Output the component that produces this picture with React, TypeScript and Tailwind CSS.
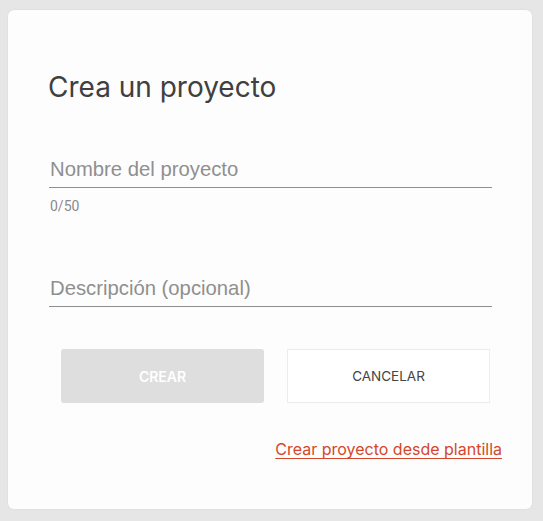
import React from "react";

export default function App() {
  return (
    <div className="w-[543px] h-[521px] bg-[#e6e6e6] pt-[10px] pl-[8px]">
      <div className="w-[524px] h-[499px] bg-[#fdfdfd] rounded-[6px] shadow-[0_0_2px_rgba(0,0,0,0.08)] flex flex-col">
        <h1 className="ml-[40px] mt-[60px] text-[28px] leading-[34px] text-[#404040] font-['Inter',sans-serif] font-normal">
          Crea un proyecto
        </h1>
        <div className="ml-[41px] w-[443px] mt-[44px] font-['Roboto',sans-serif]">
          <div className="h-[40px] border-b border-[#8f8f8f] flex items-end pb-[6px] pl-[1px]">
            <span className="text-[20.3px] leading-[24px] text-[#8f8f8f] font-['Liberation_Sans',sans-serif]">Nombre del proyecto</span>
          </div>
          <div className="mt-[10px] text-[14px] leading-[16px] text-[#8a8a8a] pl-[1px]">0/50</div>
          <div className="mt-[53px] h-[40px] border-b border-[#8f8f8f] flex items-end pb-[6px] pl-[1px]">
            <span className="text-[20.3px] leading-[24px] text-[#8f8f8f] font-['Liberation_Sans',sans-serif]">Descripción (opcional)</span>
          </div>
        </div>
        <div className="ml-[53px] mt-[42px] flex gap-[23px] font-['Inter',sans-serif]">
          <button className="w-[203px] h-[54px] rounded-[3px] bg-[#dedede] text-white text-[14px] font-semibold">
            CREAR
          </button>
          <button className="w-[203px] h-[54px] bg-white border border-[#ececec] text-[#444] text-[13.5px]">
            CANCELAR
          </button>
        </div>
        <div className="mt-[36px] pr-[30px] flex justify-end font-['Inter',sans-serif]">
          <a className="text-[16px] leading-[20px] text-[#d4472a] underline underline-offset-[3px] cursor-pointer">
            Crear proyecto desde plantilla
          </a>
        </div>
      </div>
    </div>
  );
}
